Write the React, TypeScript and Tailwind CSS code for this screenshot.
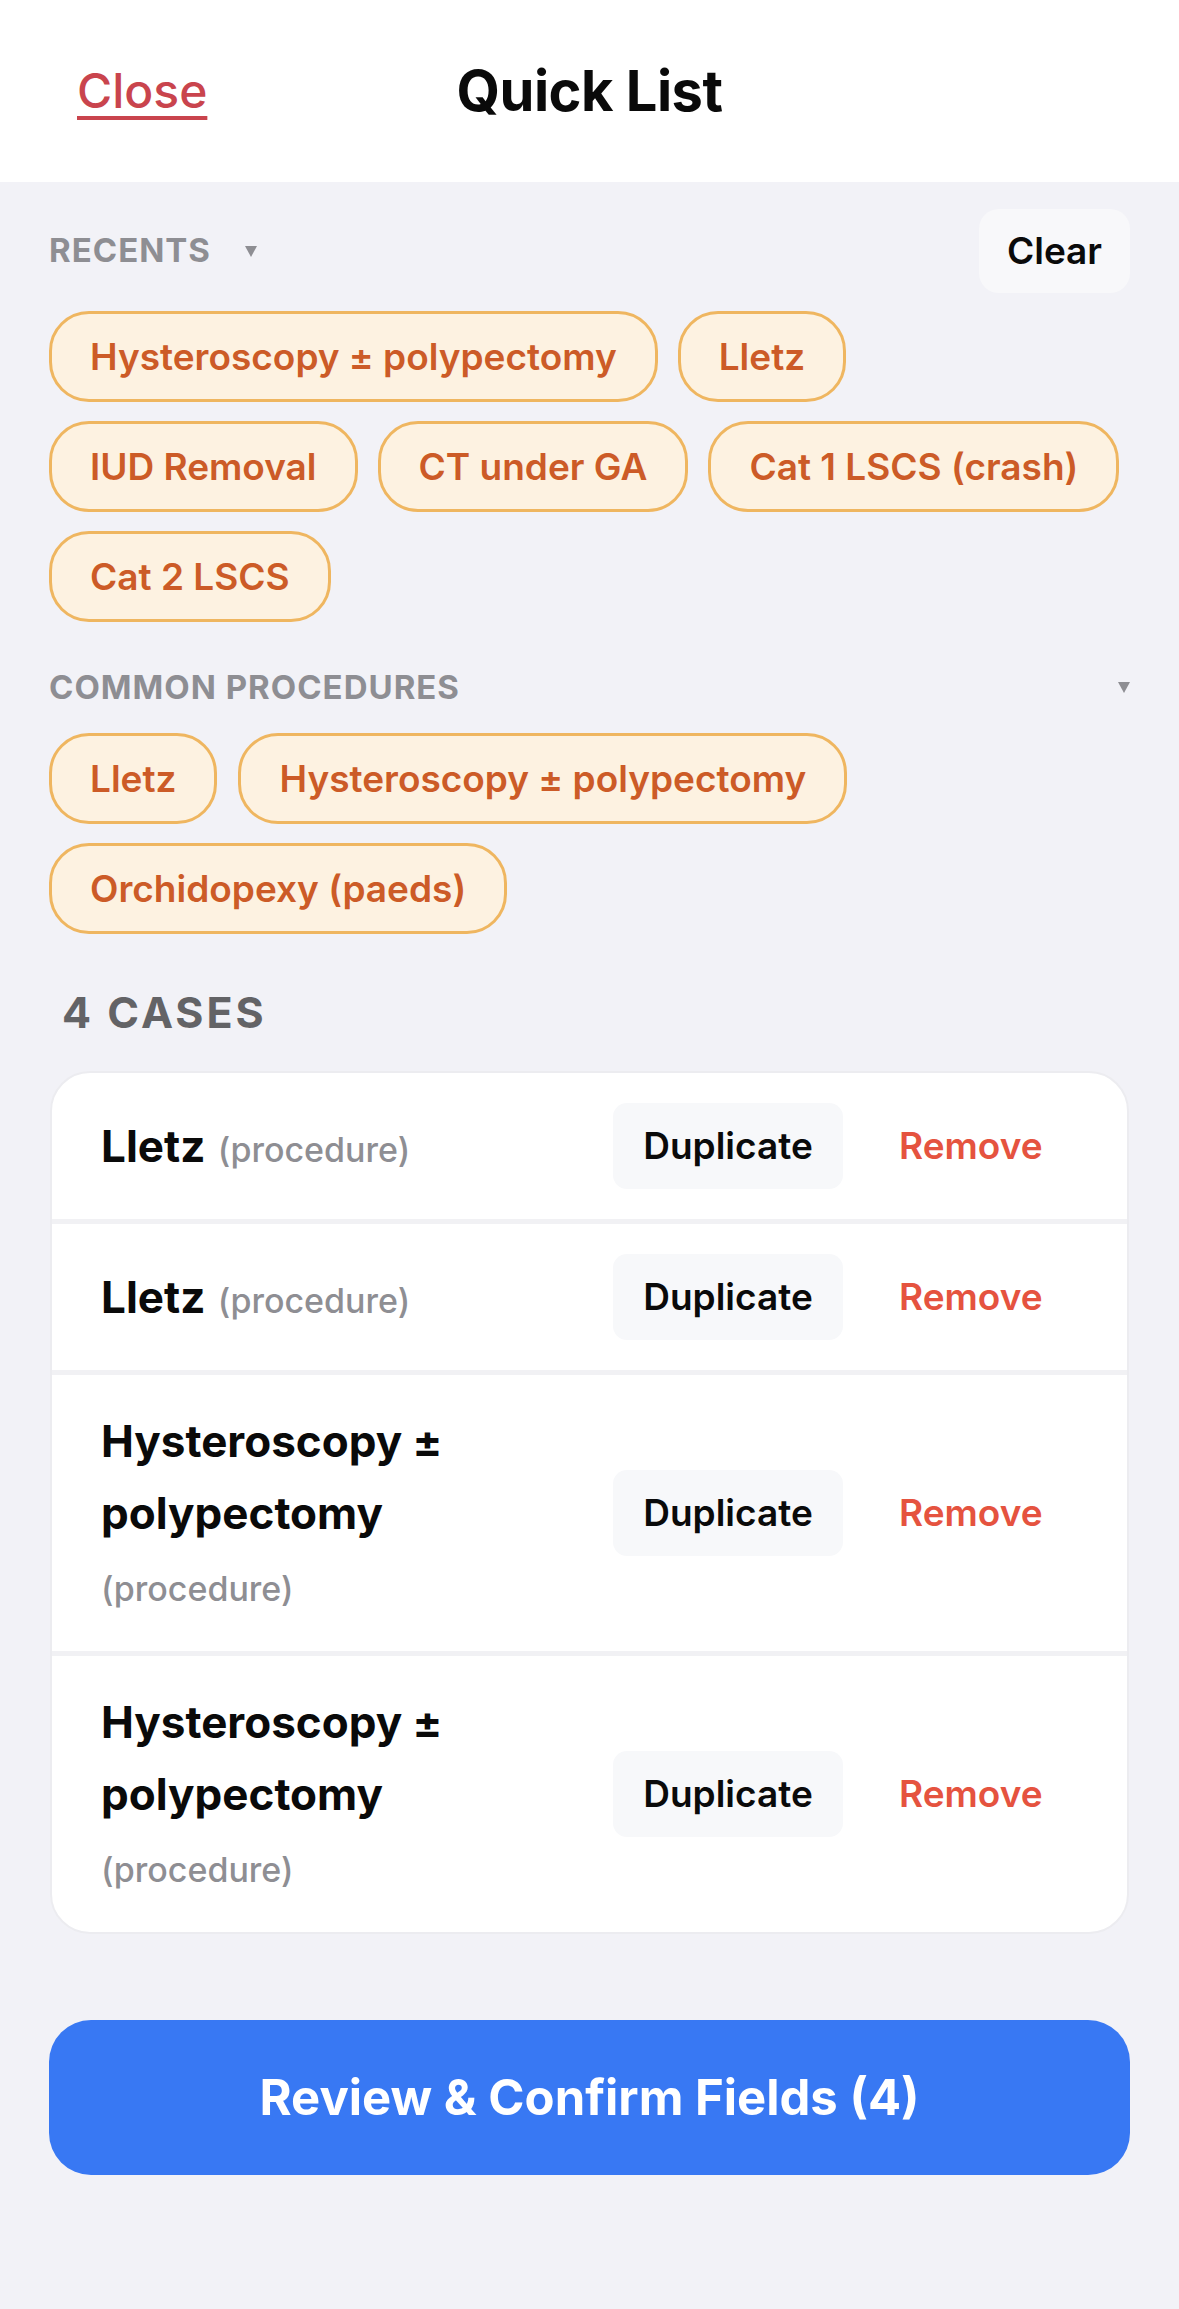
import React from "react";

const recents = [
  "Hysteroscopy ± polypectomy",
  "Lletz",
  "IUD Removal",
  "CT under GA",
  "Cat 1 LSCS (crash)",
  "Cat 2 LSCS",
];

const common = ["Lletz", "Hysteroscopy ± polypectomy", "Orchidopexy (paeds)"];

const cases = [
  { name: "Lletz", kind: "procedure" },
  { name: "Lletz", kind: "procedure" },
  { name: "Hysteroscopy ± polypectomy", kind: "procedure" },
  { name: "Hysteroscopy ± polypectomy", kind: "procedure" },
];

function Caret() {
  return (
    <svg width="12" height="11" viewBox="0 0 12 11" className="shrink-0">
      <polygon points="0,0 12,0 6,11" fill="#8e8e93" />
    </svg>
  );
}

function Chip({ label }: { label: string }) {
  return (
    <button className="h-[91px] px-[38px] rounded-[40px] border-[3px] border-[#efb660] bg-[#fdf2e1] text-[#cc5b27] text-[37px] font-semibold leading-none whitespace-nowrap">
      {label}
    </button>
  );
}

export default function App() {
  return (
    <div className="min-h-[2309px] bg-[#f2f2f7] font-['Inter','Liberation_Sans',sans-serif] text-[#0a0a0a]">
      <header className="h-[182px] bg-white grid grid-cols-[1fr_auto_1fr] items-center">
        <div className="pl-[77px]">
          <a className="text-[48px] font-medium text-[#c9444d] underline decoration-[4px] underline-offset-[8px]">
            Close
          </a>
        </div>
        <h1 className="text-[56px] font-bold tracking-[-0.5px]">Quick List</h1>
        <div />
      </header>

      <main className="px-[49px] pt-[27px]">
        <section>
          <div className="flex items-center justify-between h-[84px]">
            <div className="flex items-center gap-[34px]">
              <h2 className="text-[33px] font-bold tracking-[1px] text-[#8e8e93]">RECENTS</h2>
              <Caret />
            </div>
            <button className="h-[84px] w-[151px] rounded-[20px] bg-[#f8f8fa] text-[37px] font-semibold">
              Clear
            </button>
          </div>
          <div className="mt-[18px] flex flex-wrap gap-x-[20px] gap-y-[19px]">
            {recents.map((r) => (
              <Chip key={r} label={r} />
            ))}
          </div>
        </section>

        <section className="mt-[45px]">
          <div className="flex items-center justify-between h-[41px]">
            <h2 className="text-[33px] font-bold tracking-[1px] text-[#8e8e93]">COMMON PROCEDURES</h2>
            <Caret />
          </div>
          <div className="mt-[25px] flex flex-wrap gap-x-[21px] gap-y-[19px]">
            {common.map((c) => (
              <Chip key={c} label={c} />
            ))}
          </div>
        </section>

        <h2 className="mt-[53px] pl-[13px] h-[50px] leading-[50px] text-[43px] font-bold tracking-[3px] text-[#636366]">
          4 CASES
        </h2>

        <div className="mt-[34px] mx-[1px] rounded-[40px] bg-white border-2 border-[#ececf0] overflow-hidden">
          {cases.map((c, i) => (
            <div
              key={i}
              className={`flex items-center pl-[49px] pr-[86px] py-[30px] ${i > 0 ? "border-t-[5px] border-[#f1f1f4]" : ""}`}
            >
              <p className="flex-1 min-w-0 pr-[70px] text-[44px] leading-[72px]">
                <span className="font-bold">{c.name}</span>{" "}
                <span className="text-[34px] leading-none font-medium text-[#8e8e93]">({c.kind})</span>
              </p>
              <button className="h-[86px] w-[230px] shrink-0 rounded-[14px] bg-[#f7f8fa] text-[37px] font-semibold">
                Duplicate
              </button>
              <button className="ml-[56px] w-[142px] shrink-0 text-left text-[37px] font-semibold text-[#e5533f]">
                Remove
              </button>
            </div>
          ))}
        </div>

        <button className="mt-[86px] w-full h-[155px] rounded-[42px] bg-[#3878f3] text-white text-[49px] font-bold">
          Review &amp; Confirm Fields (4)
        </button>
      </main>
    </div>
  );
}
